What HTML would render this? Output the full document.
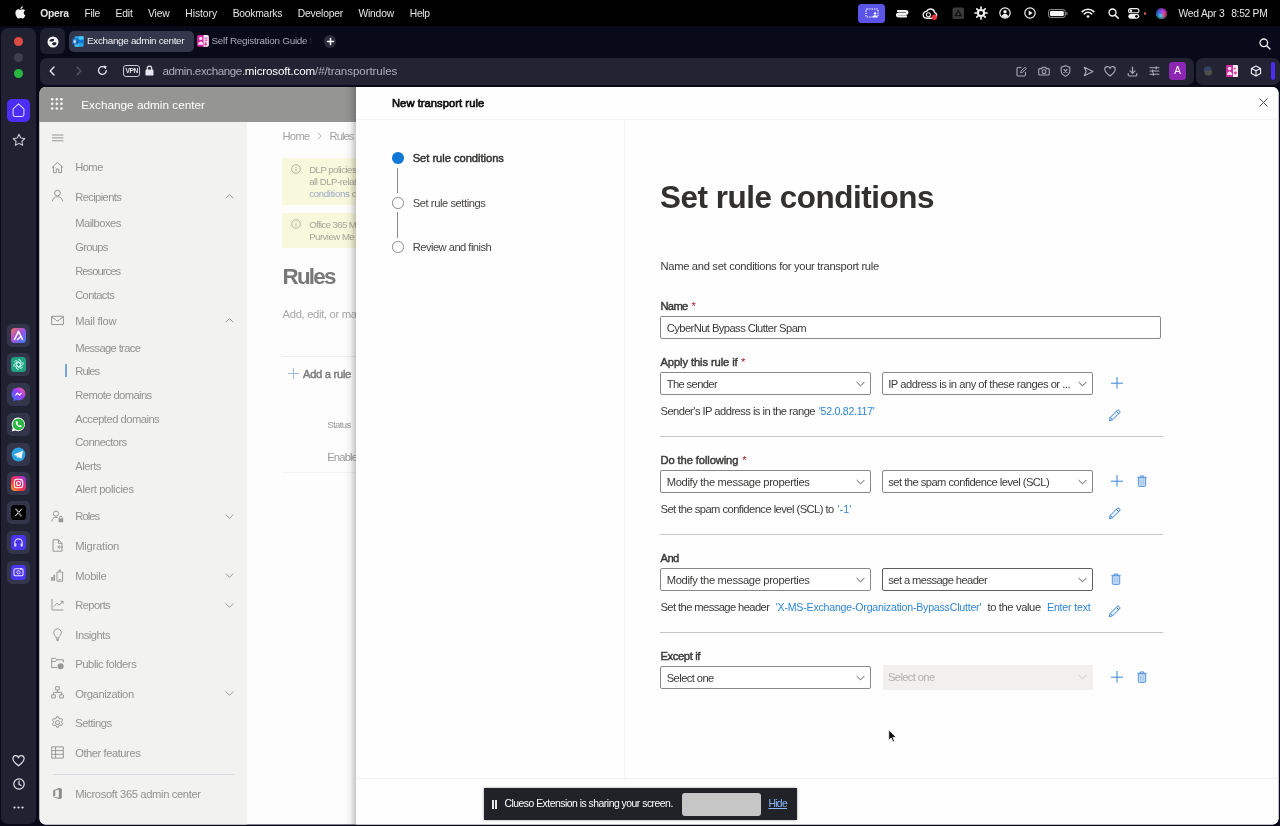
<!DOCTYPE html>
<html lang="en">
<head>
<meta charset="utf-8">
<title>Exchange admin center</title>
<style>
*{box-sizing:border-box;margin:0;padding:0}
html,body{width:1280px;height:826px;overflow:hidden;background:#080919;font-family:"Liberation Sans",sans-serif}
.abs,.t,svg.i{position:absolute}
.t{white-space:pre;display:block}
.layer{position:absolute;left:0;top:0;width:1280px;height:826px}
#page{clip-path:inset(87px 1.5px 1.5px 39.5px round 6px);background:#fdfdfd}
.dd{position:absolute;height:23px;border:1px solid #8a8886;border-radius:2px;background:#fff}
.hr{position:absolute;left:660px;width:502.5px;height:1px;background:#c8c6c4}
.tile{position:absolute;left:7px;width:23px;height:23px;border-radius:5px;background:#33354a}
svg.i{overflow:visible}
</style>
</head>
<body>
<div class="layer" id="root" style="will-change:transform">
<!-- ================= macOS menu bar ================= -->
<div class="abs" style="left:0;top:0;width:1280px;height:26px;background:#000"></div>
<!-- ================= Opera chrome ================= -->
<div class="abs" style="left:1px;top:28px;width:35.3px;height:796px;border-radius:7px;background:#202231"></div>
<div class="abs" style="left:40px;top:28px;width:25.3px;height:26px;border-radius:6px;background:#1e2030"></div>
<div class="abs" style="left:69px;top:31px;width:124.5px;height:21.3px;border-radius:5px;background:#34374b"></div>
<div class="abs" style="left:40px;top:57.5px;width:1153.5px;height:27px;border-radius:7px;background:#222434"></div>
<div class="abs" style="left:1195.5px;top:57.5px;width:84px;height:27px;border-radius:7px;background:#222434"></div>
<svg class="i" style="left:12.70px;top:5.40px" width="14.8" height="14.8" viewBox="0 0 24 24" ><path fill="#f2f2f2" d="M18.71 19.5c-.83 1.24-1.71 2.45-3.05 2.47-1.34.03-1.77-.79-3.29-.79-1.53 0-2 .77-3.27.82-1.31.05-2.3-1.32-3.14-2.53C4.25 17 2.94 12.45 4.7 9.39c.87-1.52 2.43-2.48 4.12-2.51 1.28-.02 2.5.87 3.29.87.78 0 2.26-1.07 3.81-.91.65.03 2.47.26 3.64 1.98-.09.06-2.17 1.28-2.15 3.81.03 3.02 2.65 4.03 2.68 4.04-.03.07-.42 1.44-1.38 2.83M13 3.5c.73-.83 1.94-1.46 2.94-1.5.13 1.17-.34 2.35-1.04 3.19-.69.85-1.83 1.51-2.95 1.42-.15-1.15.41-2.35 1.05-3.11z"/></svg>
<div class="abs" style="left:858.4px;top:4px;width:27px;height:18.8px;border-radius:3.5px;background:#5a55e8"></div>
<svg class="i" style="left:865.00px;top:7.80px" width="14" height="11" viewBox="0 0 14 11" ><rect x="1" y="1" width="12" height="8" rx="1" fill="none" stroke="#fff" stroke-width="1.1" stroke-dasharray="1.4 .9"/><circle cx="10" cy="5.4" r="1.2" fill="#fff"/><path d="M7.6 9.2c.3-1.5 1.2-2 2.4-2s2.1.5 2.4 2z" fill="#fff"/></svg>
<svg class="i" style="left:895.30px;top:8.00px" width="14" height="11" viewBox="0 0 14 11" ><path d="M3 3.2h7.5c2.4 0 2.4 2.6 0 2.6H4c-2.6 0-2.6 2.6 0 2.6h7" fill="none" stroke="#f2f2f2" stroke-width="2.3" stroke-linecap="round"/></svg>
<svg class="i" style="left:922.00px;top:7.50px" width="16" height="12" viewBox="0 0 16 12" ><path d="M4.6 10.2a3.4 3.4 0 0 1 0-6.8 4.3 4.3 0 0 1 8.1 1.2 2.9 2.9 0 0 1-.6 5.6z" fill="none" stroke="#eee" stroke-width="1.4"/><circle cx="6.4" cy="6.8" r="2" fill="none" stroke="#eee" stroke-width="1.1"/><circle cx="12.3" cy="9.2" r="2.7" fill="#e8383d"/></svg>
<svg class="i" style="left:951.75px;top:7.15px" width="12.5" height="12.5" viewBox="0 0 12.5 12.5" ><rect x=".5" y=".5" width="11.5" height="11.5" rx="1.5" fill="#3a3a3a"/><path d="M6.25 3.6 9.3 8.6H3.2z" fill="none" stroke="#111" stroke-width="1.2"/></svg>
<svg class="i" style="left:974.30px;top:6.40px" width="14" height="14" viewBox="0 0 14 14" ><circle cx="7" cy="7" r="3.1" fill="none" stroke="#f2f2f2" stroke-width="2"/><g stroke="#f2f2f2" stroke-width="1.7" stroke-linecap="round"><path d="M7 1v1.6M7 11.4V13M1 7h1.6M11.4 7H13M2.8 2.8l1.1 1.1M10.1 10.1l1.1 1.1M2.8 11.2l1.1-1.1M10.1 3.9l1.1-1.1"/></g></svg>
<svg class="i" style="left:999.00px;top:7.40px" width="12" height="12" viewBox="0 0 12 12" ><circle cx="6" cy="6" r="5.2" fill="none" stroke="#f2f2f2" stroke-width="1.2"/><circle cx="6" cy="4.7" r="1.7" fill="#f2f2f2"/><path d="M2.7 9.3c.6-1.7 1.8-2.2 3.3-2.2s2.7.5 3.3 2.2A5 5 0 0 1 6 10.8a5 5 0 0 1-3.3-1.5z" fill="#f2f2f2"/></svg>
<svg class="i" style="left:1023.70px;top:7.40px" width="12" height="12" viewBox="0 0 12 12" ><circle cx="6" cy="6" r="5.2" fill="none" stroke="#f2f2f2" stroke-width="1.2"/><path d="M4.7 3.6 8.6 6 4.7 8.4z" fill="#f2f2f2"/></svg>
<svg class="i" style="left:1047.50px;top:8.90px" width="20" height="9" viewBox="0 0 20 9" ><rect x=".6" y=".6" width="16.6" height="7.8" rx="2" fill="none" stroke="#9a9a9a" stroke-width="1"/><rect x="2" y="2" width="13.8" height="5" rx="1" fill="#f4f4f4"/><path d="M18.4 3v3c.9-.2 1.2-.9 1.2-1.5S19.300 3.200 18.400 3z" fill="#9a9a9a"/></svg>
<svg class="i" style="left:1080.60px;top:8.15px" width="14" height="10.5" viewBox="0 0 14 10.5" ><g fill="none" stroke="#f2f2f2" stroke-width="1.7" stroke-linecap="round"><path d="M1.2 3.6a8.3 8.3 0 0 1 11.600 0"/><path d="M3.4 5.900a5.200 5.200 0 0 1 7.200 0"/></g><path d="M7 10.200 5.200 8.100a2.600 2.600 0 0 1 3.600 0z" fill="#f2f2f2"/></svg>
<svg class="i" style="left:1107.50px;top:8.10px" width="11" height="11" viewBox="0 0 11 11" ><circle cx="4.5" cy="4.5" r="3.5" fill="none" stroke="#f2f2f2" stroke-width="1.4"/><path d="M7.100 7.100 10.300 10.300" stroke="#f2f2f2" stroke-width="1.600" stroke-linecap="round"/></svg>
<svg class="i" style="left:1128.45px;top:7.90px" width="11.5" height="11" viewBox="0 0 11.5 11" ><rect x=".6" y=".6" width="10.300" height="4.200" rx="2.100" fill="none" stroke="#f2f2f2" stroke-width="1.100"/><circle cx="3" cy="2.700" r="1.200" fill="#f2f2f2"/><rect x=".3" y="6" width="10.900" height="4.700" rx="2.350" fill="#f2f2f2"/><circle cx="8.500" cy="8.350" r="1.300" fill="#000"/></svg>
<div class="abs" style="left:1143.6px;top:12.4px;width:2.300px;height:2.300px;border-radius:50%;background:#cc504c"></div>
<div class="abs" style="left:1156.2px;top:8.200px;width:10.600px;height:10.600px;border-radius:50%;background:conic-gradient(from 200deg,#3fd0e6,#3a6df0,#c23df0,#f0457a,#3fd0e6);box-shadow:inset 0 0 2.500px 1px rgba(10,10,30,.55)"></div>
<div class="abs" style="left:14.100px;top:36.500px;width:9px;height:9px;border-radius:50%;background:#df4a42"></div>
<div class="abs" style="left:14.100px;top:52.500px;width:9px;height:9px;border-radius:50%;background:#3d3f4e"></div>
<div class="abs" style="left:14.100px;top:68.500px;width:9px;height:9px;border-radius:50%;background:#27b83e"></div>
<svg class="i" style="left:46.50px;top:35.50px" width="12" height="12" viewBox="0 0 12 12" ><circle cx="6" cy="6" r="5.500" fill="#f1f1f4"/><path d="M2.300 4.700C2.900 3.200 5 2.500 6.700 3.100 7.700 3.500 7.200 4.800 6.100 5.200 5 5.600 3.500 5.900 2.300 4.700zM5.100 7.500C5.700 6.200 7.600 5.900 8.900 6.500 9.900 7.100 9.300 8.600 8.100 9.200 6.800 9.700 4.900 8.900 5.100 7.500z" fill="#1e2030"/></svg>
<svg class="i" style="left:72.00px;top:36.20px" width="11.6" height="11" viewBox="0 0 11.6 11" ><rect x="2.600" y=".2" width="9" height="10.600" rx="1.200" fill="#28a8ea"/><path d="M2.600 3.600h9v3.600h-9z" fill="#0f78d4"/><path d="M7 .2h4.600v3.400H7zM2.600 7.200H7v3.600H2.600z" fill="#50d9ff" opacity=".7"/><rect x="0" y="2.400" width="6.200" height="6.200" rx=".9" fill="#0f62b4"/><path d="M2 4.100h2.300M2 5.500h2M2 6.900h2.300M2 4.100v2.800" stroke="#fff" stroke-width=".8" fill="none"/></svg>
<svg class="i" style="left:196.60px;top:35.40px" width="11.8" height="11.8" viewBox="0 0 11.8 11.8" ><rect width="11.800" height="11.800" rx="1.800" fill="#d4229b"/><path d="M6.500 0h3.500a1.800 1.800 0 0 1 1.800 1.800v8.200a1.800 1.800 0 0 1-1.800 1.800H6.500z" fill="#f3e9f2"/><circle cx="3.700" cy="3.400" r="1.700" fill="#fbe6f5"/><path d="M1 9.800c.3-2.300 1.300-3.300 2.700-3.300s2.400 1 2.700 3.300z" fill="#fbe6f5"/><path d="M7.600 3.200h2.800M7.600 5.200h2.800M7.600 7.200h2" stroke="#d4229b" stroke-width=".9"/><circle cx="8.600" cy="9.200" r="1.300" fill="#e8338f"/></svg>
<div class="abs" style="left:323.800px;top:35.400px;width:12.400px;height:12.400px;border-radius:50%;background:#2a2c3c"></div>
<svg class="i" style="left:326.50px;top:38.10px" width="7" height="7" viewBox="0 0 7 7" ><path d="M3.500 .5v6M.5 3.500h6" stroke="#fff" stroke-width="1.500" stroke-linecap="round"/></svg>
<svg class="i" style="left:1258.60px;top:38.40px" width="12" height="12" viewBox="0 0 12 12" ><circle cx="4.800" cy="4.800" r="3.800" fill="none" stroke="#f0f0f4" stroke-width="1.300"/><path d="M7.700 7.700 11 11" stroke="#f0f0f4" stroke-width="1.400" stroke-linecap="round"/></svg>
<svg class="i" style="left:49.00px;top:65.50px" width="6" height="10" viewBox="0 0 6 10" ><path d="M5 1 1.200 5 5 9" fill="none" stroke="#e4e4ec" stroke-width="1.400" stroke-linecap="round" stroke-linejoin="round"/></svg>
<svg class="i" style="left:76.20px;top:65.50px" width="6" height="10" viewBox="0 0 6 10" ><path d="M1 1 4.800 5 1 9" fill="none" stroke="#55576a" stroke-width="1.300" stroke-linecap="round" stroke-linejoin="round"/></svg>
<svg class="i" style="left:96.90px;top:65.10px" width="11" height="11" viewBox="0 0 11 11" ><path d="M9.300 5.500A3.900 3.900 0 1 1 7.900 2.500" fill="none" stroke="#e4e4ec" stroke-width="1.300" stroke-linecap="round"/><path d="M6.500 .4 9.600 1.300 8.700 4.400z" fill="#e4e4ec"/></svg>
<div class="abs" style="left:123.200px;top:65.200px;width:16.800px;height:11.400px;border-radius:3px;border:1px solid #c9c9d4"></div>
<svg class="i" style="left:145.30px;top:65.30px" width="9" height="11" viewBox="0 0 9 11" ><rect x=".5" y="4.600" width="8" height="6" rx="1.200" fill="#e4e4ec"/><path d="M2.300 5V3.300a2.200 2.200 0 0 1 4.400 0V5" fill="none" stroke="#e4e4ec" stroke-width="1.200"/></svg>
<svg class="i" style="left:1016.10px;top:65.50px" width="11" height="11" viewBox="0 0 11 11" ><path d="M5 1.500H2.200A1.200 1.200 0 0 0 1 2.700V8.800A1.200 1.200 0 0 0 2.200 10H8.300A1.200 1.200 0 0 0 9.500 8.800V6.200" fill="none" stroke="#aaacb8" stroke-width="1.100" stroke-linecap="round"/><path d="M4.600 6.900 5 5.200 8.900 1.300 10.200 2.600 6.300 6.500z" fill="none" stroke="#aaacb8" stroke-width="1" stroke-linejoin="round"/></svg>
<svg class="i" style="left:1037.60px;top:66.20px" width="12" height="10" viewBox="0 0 12 10" ><path d="M1.700 2.600h1.900l.9-1.400h3l.9 1.400h1.900a1 1 0 0 1 1 1V8a1 1 0 0 1-1 1H1.700a1 1 0 0 1-1-1V3.600a1 1 0 0 1 1-1z" fill="none" stroke="#aaacb8" stroke-width="1.100" stroke-linejoin="round"/><circle cx="6" cy="5.700" r="1.900" fill="none" stroke="#aaacb8" stroke-width="1.100"/></svg>
<svg class="i" style="left:1060.10px;top:65.20px" width="11" height="12" viewBox="0 0 11 12" ><path d="M5.500 .8 9.800 2.300V6c0 2.600-2 4.200-4.300 5.200C3.200 10.200 1.200 8.600 1.200 6V2.300z" fill="none" stroke="#aaacb8" stroke-width="1.100" stroke-linejoin="round"/><path d="M4 4.500 7 7.500M7 4.500 4 7.500" stroke="#aaacb8" stroke-width="1.100" stroke-linecap="round"/></svg>
<svg class="i" style="left:1083.10px;top:65.70px" width="11" height="11" viewBox="0 0 11 11" ><path d="M1.300 1.200 10 5.500 1.300 9.800 3.200 5.500z" fill="none" stroke="#aaacb8" stroke-width="1.100" stroke-linejoin="round"/></svg>
<svg class="i" style="left:1104.40px;top:65.90px" width="12" height="11" viewBox="0 0 12 11" ><path d="M6 10C3.400 8 .9 6.100.9 3.700A2.600 2.600 0 0 1 6 2.600 2.600 2.600 0 0 1 11.100 3.700C11.100 6.100 8.600 8 6 10z" fill="none" stroke="#aaacb8" stroke-width="1.100" stroke-linejoin="round"/></svg>
<svg class="i" style="left:1127.10px;top:65.70px" width="11" height="11" viewBox="0 0 11 11" ><path d="M5.500 1v6M3 4.800 5.500 7.300 8 4.800M1.200 7.600V8.800A1.200 1.200 0 0 0 2.400 10H8.600A1.200 1.200 0 0 0 9.800 8.800V7.600" fill="none" stroke="#aaacb8" stroke-width="1.200" stroke-linecap="round" stroke-linejoin="round"/></svg>
<svg class="i" style="left:1149.10px;top:66.00px" width="11" height="10" viewBox="0 0 11 10" ><path d="M1 1.800h9M1 5h9M1 8.200h9" stroke="#aaacb8" stroke-width="1.100" stroke-linecap="round"/><path d="M7.200 .800v2M3.600 4v2M4.400 7.200v2" stroke="#aaacb8" stroke-width="1.200" stroke-linecap="round"/></svg>
<div class="abs" style="left:1168.700px;top:62.200px;width:17.600px;height:18px;border-radius:3.500px;background:#8c27b4"></div>
<svg class="i" style="left:1201.60px;top:64.80px" width="12" height="12" viewBox="0 0 12 12" opacity=".8"><path d="M2 4.500a3 3 0 0 1 3-3h2a2 2 0 0 1 2 2V6H5a3 3 0 0 0-3 3z" fill="#3d4c74"/><path d="M10 7.500a3 3 0 0 1-3 3H5a2 2 0 0 1-2-2V6h4a3 3 0 0 0 3-3z" fill="#5a5a48"/></svg>
<svg class="i" style="left:1226.00px;top:65.00px" width="12" height="12" viewBox="0 0 12 12" ><rect width="12" height="12" rx="1" fill="#d12a9a"/><path d="M7 0h4a1 1 0 0 1 1 1v10a1 1 0 0 1-1 1H7z" fill="#f7eef6"/><circle cx="3.600" cy="3.600" r="1.800" fill="#f9dff1"/><path d="M1 10c.3-2.400 1.200-3.400 2.600-3.400S6 7.600 6.300 10z" fill="#f9dff1"/><circle cx="8.800" cy="3.500" r="1.100" fill="#e8338f"/><circle cx="9.400" cy="8" r="1.400" fill="#e8338f"/></svg>
<svg class="i" style="left:1249.60px;top:65.00px" width="12" height="12" viewBox="0 0 12 12" ><path d="M6 1 10.600 3.400V8.600L6 11 1.400 8.600V3.400z M1.400 3.400 6 5.800 10.600 3.400M6 5.800V11" fill="none" stroke="#eeeef4" stroke-width="1.100" stroke-linejoin="round"/></svg>
<div class="abs" style="left:1271px;top:62px;width:4.400px;height:18px;border-radius:2px;background:#4a2cf5"></div>
<div class="abs" style="left:7.400px;top:99px;width:23px;height:22.600px;border-radius:5px;background:#4b2df6"></div>
<svg class="i" style="left:12.20px;top:103.05px" width="13" height="14.5" viewBox="0 0 13 14.5" ><path d="M1.100 5.900 6.500 .900 11.900 5.900V11.600A1.800 1.800 0 0 1 10.100 13.400H2.900A1.800 1.800 0 0 1 1.100 11.600z" fill="none" stroke="#dcd6ff" stroke-width="1.050" stroke-linejoin="round"/></svg>
<svg class="i" style="left:11.60px;top:133.00px" width="14" height="14" viewBox="0 0 14 14" ><path d="M7 1.300 8.800 5l4 .5-2.900 2.800.7 4L7 10.400 3.400 12.300l.7-4L1.200 5.500l4-.5z" fill="none" stroke="#cfcfd8" stroke-width="1.050" stroke-linejoin="round"/></svg>
<div class="tile" style="top:323.5px"></div>
<div class="tile" style="top:353.3px"></div>
<div class="tile" style="top:382.9px"></div>
<div class="tile" style="top:412.7px"></div>
<div class="tile" style="top:442.5px"></div>
<div class="tile" style="top:471.9px"></div>
<div class="tile" style="top:501.3px"></div>
<div class="tile" style="top:531.1px"></div>
<div class="tile" style="top:560.5px"></div>
<svg class="i" style="left:11.00px;top:327.50px" width="15" height="15" viewBox="0 0 15 15" ><defs><linearGradient id="ga" x1="0" y1="0" x2="1" y2="1"><stop offset="0" stop-color="#f46a5a"/><stop offset=".5" stop-color="#9a55e8"/><stop offset="1" stop-color="#3a7af0"/></linearGradient></defs><rect width="15" height="15" rx="3.500" fill="url(#ga)"/><path d="M3.500 11.500 7.500 3.300 11.500 11.500M9.800 8.500 6.500 11.500" fill="none" stroke="#fff" stroke-width="1.500" stroke-linejoin="round" stroke-linecap="round"/></svg>
<svg class="i" style="left:11.00px;top:357.30px" width="15" height="15" viewBox="0 0 15 15" ><rect width="15" height="15" rx="3.500" fill="#1fa383"/><g fill="none" stroke="#e6fff7" stroke-width="1"><circle cx="7.500" cy="7.500" r="2"/><path d="M7.500 2.600a2.400 2.400 0 0 1 2.400 2.400v2.300M11.800 5.200a2.400 2.400 0 0 1-.9 3.300L8.900 9.600M11.800 9.900a2.400 2.400 0 0 1-3.300.9L6.500 9.600M7.500 12.400A2.400 2.400 0 0 1 5.100 10V7.700M3.200 9.800a2.400 2.400 0 0 1 .9-3.300L6.100 5.400M3.200 5.100a2.400 2.400 0 0 1 3.300-.9L8.500 5.400"/></g></svg>
<svg class="i" style="left:11.00px;top:386.90px" width="15" height="15" viewBox="0 0 15 15" ><defs><linearGradient id="gm" x1="0" y1="1" x2="1" y2="0"><stop offset="0" stop-color="#2a7bff"/><stop offset=".55" stop-color="#9a3cff"/><stop offset="1" stop-color="#ff5e7a"/></linearGradient></defs><path d="M7.500 .6C3.600 .6.600 3.400.600 7c0 1.900.8 3.600 2.100 4.700V14.200L5 12.900c.8.200 1.600.4 2.500.4 3.900 0 6.900-2.800 6.900-6.400S11.400.600 7.500 .600z" fill="url(#gm)"/><path d="M3.300 9 6.300 5.300 8.200 7 11.700 5.200 8.700 8.900 6.800 7.200z" fill="#fff"/></svg>
<svg class="i" style="left:11.00px;top:416.70px" width="15" height="15" viewBox="0 0 15 15" ><path d="M7.500 .6a6.800 6.800 0 0 0-5.800 10.400L.700 14.400l3.500-.9A6.800 6.800 0 1 0 7.500 .600z" fill="#fff"/><circle cx="7.500" cy="7.400" r="5.800" fill="#2bb741"/><path d="M5.300 4.300c-.5.500-.8 1.200-.5 2.100.6 1.700 2 3.100 3.700 3.700.9.300 1.600 0 2.100-.5.300-.4.200-.7-.1-.9l-1-.6c-.3-.2-.6-.100-.800.200l-.3.400c-.9-.4-1.600-1.100-2-2l.4-.3c.3-.2.400-.5.200-.8l-.6-1c-.2-.4-.6-.500-1.100-.300z" fill="#fff"/></svg>
<svg class="i" style="left:11.00px;top:446.50px" width="15" height="15" viewBox="0 0 15 15" ><circle cx="7.500" cy="7.500" r="6.900" fill="#2aa3e0"/><path d="M3 7.400 11.300 4c.4-.1.700.1.600.6L10.500 11c-.1.500-.4.600-.8.400L7.600 9.800 6.500 10.900c-.2.200-.3.200-.4-.1L5.600 8.800 3.100 8c-.5-.2-.5-.4-.1-.6z" fill="#fff"/><path d="M5.600 8.800 10 5.600 6.800 9.200 6.500 10.900z" fill="#c8dcea"/></svg>
<svg class="i" style="left:11.00px;top:475.90px" width="15" height="15" viewBox="0 0 15 15" ><defs><linearGradient id="gi" x1="0" y1="1" x2="1" y2="0"><stop offset="0" stop-color="#fdb340"/><stop offset=".35" stop-color="#f4383d"/><stop offset=".7" stop-color="#d12d95"/><stop offset="1" stop-color="#6c3fe0"/></linearGradient></defs><rect width="15" height="15" rx="4" fill="url(#gi)"/><rect x="3.300" y="3.300" width="8.400" height="8.400" rx="2.500" fill="none" stroke="#fff" stroke-width="1.100"/><circle cx="7.500" cy="7.500" r="2" fill="none" stroke="#fff" stroke-width="1.100"/><circle cx="10" cy="5" r=".6" fill="#fff"/></svg>
<svg class="i" style="left:11.00px;top:505.30px" width="15" height="15" viewBox="0 0 15 15" ><rect width="15" height="15" rx="3.500" fill="#000"/><path d="M4 3.800h1.700l5.300 7.400H9.300z" fill="#fff"/><path d="M10.800 3.800 4.200 11.200" stroke="#fff" stroke-width="1" /><path d="M4.700 4.300h.7l4.900 6.400h-.7z" fill="#000"/></svg>
<svg class="i" style="left:11.00px;top:535.10px" width="15" height="15" viewBox="0 0 15 15" ><rect width="15" height="15" rx="3.500" fill="#4a36f0"/><path d="M3.800 9.500V7.500a3.700 3.700 0 0 1 7.400 0v2" fill="none" stroke="#d8d4ff" stroke-width="1.200"/><rect x="3.200" y="8.300" width="2.200" height="3.400" rx="1" fill="#d8d4ff"/><rect x="9.600" y="8.300" width="2.200" height="3.400" rx="1" fill="#d8d4ff"/></svg>
<svg class="i" style="left:11.00px;top:564.50px" width="15" height="15" viewBox="0 0 15 15" ><rect width="15" height="15" rx="3.500" fill="#4a36f0"/><rect x="3" y="3.800" width="9" height="7" rx="1.300" fill="none" stroke="#e8e4ff" stroke-width="1.100"/><circle cx="7.500" cy="7.300" r="1.600" fill="none" stroke="#e8e4ff" stroke-width="1"/><path d="M10 3v2M9 4h2" stroke="#e8e4ff" stroke-width=".9"/></svg>
<svg class="i" style="left:12.10px;top:754.60px" width="13" height="12" viewBox="0 0 13 12" ><path d="M6.500 10.800C3.600 8.600 1 6.600 1 4A2.800 2.800 0 0 1 6.500 2.900 2.800 2.800 0 0 1 12 4c0 2.600-2.600 4.600-5.500 6.800z" fill="none" stroke="#e8e8ee" stroke-width="1.200" stroke-linejoin="round"/></svg>
<svg class="i" style="left:12.60px;top:778.00px" width="12" height="12" viewBox="0 0 12 12" ><circle cx="6" cy="6" r="5.200" fill="none" stroke="#e8e8ee" stroke-width="1.200"/><path d="M6 3v3.200l2 1.200" fill="none" stroke="#e8e8ee" stroke-width="1.200" stroke-linecap="round"/></svg>
<svg class="i" style="left:13.10px;top:805.90px" width="11" height="3" viewBox="0 0 11 3" ><circle cx="1.500" cy="1.500" r="1.100" fill="#e8e8ee"/><circle cx="5.500" cy="1.500" r="1.100" fill="#e8e8ee"/><circle cx="9.500" cy="1.500" r="1.100" fill="#e8e8ee"/></svg>
<span class="t" style="left:40.20px;top:6.00px;font-size:10.3px;line-height:16px;color:#e6e6e6;font-weight:700;letter-spacing:-0.253px;">Opera</span>
<span class="t" style="left:84.60px;top:6.00px;font-size:10.3px;line-height:16px;color:#e6e6e6;letter-spacing:-0.348px;">File</span>
<span class="t" style="left:115.50px;top:6.00px;font-size:10.3px;line-height:16px;color:#e6e6e6;letter-spacing:-0.138px;">Edit</span>
<span class="t" style="left:148.00px;top:6.00px;font-size:10.3px;line-height:16px;color:#e6e6e6;letter-spacing:-0.160px;">View</span>
<span class="t" style="left:185.30px;top:6.00px;font-size:10.3px;line-height:16px;color:#e6e6e6;letter-spacing:-0.050px;">History</span>
<span class="t" style="left:232.70px;top:6.00px;font-size:10.3px;line-height:16px;color:#e6e6e6;letter-spacing:-0.222px;">Bookmarks</span>
<span class="t" style="left:297.70px;top:6.00px;font-size:10.3px;line-height:16px;color:#e6e6e6;letter-spacing:-0.171px;">Developer</span>
<span class="t" style="left:358.50px;top:6.00px;font-size:10.3px;line-height:16px;color:#e6e6e6;letter-spacing:-0.204px;">Window</span>
<span class="t" style="left:409.80px;top:6.00px;font-size:10.3px;line-height:16px;color:#e6e6e6;letter-spacing:-0.297px;">Help</span>
<span class="t" style="left:1178.50px;top:6.00px;font-size:10.3px;line-height:16px;color:#e6e6e6;letter-spacing:-0.210px;">Wed Apr 3</span>
<span class="t" style="left:1231.20px;top:6.00px;font-size:10.3px;line-height:16px;color:#e6e6e6;letter-spacing:-0.294px;">8:52 PM</span>
<span class="t" style="left:87.00px;top:33.00px;font-size:9.9px;line-height:16px;color:#f0f0f4;letter-spacing:-0.308px;">Exchange admin center</span>
<span class="t" style="left:211.40px;top:33.00px;font-size:9.9px;line-height:16px;color:#a9aab6;letter-spacing:-0.242px;-webkit-mask-image:linear-gradient(90deg,#000 94%,transparent 100%);mask-image:linear-gradient(90deg,#000 94%,transparent 100%);">Self Registration Guide f</span>
<span class="t" style="left:162.50px;top:62.90px;font-size:11.6px;line-height:16px;color:#acaebb;letter-spacing:-0.407px;">admin.exchange.</span>
<span class="t" style="left:244.70px;top:62.90px;font-size:11.6px;line-height:16px;color:#ffffff;letter-spacing:-0.143px;">microsoft.com</span>
<span class="t" style="left:315.00px;top:62.90px;font-size:11.6px;line-height:16px;color:#acaebb;letter-spacing:-0.093px;">/#/transportrules</span>
<span class="t" style="left:125.50px;top:62.80px;font-size:6.6px;line-height:16px;color:#e6e6ee;font-weight:700;letter-spacing:-0.454px;">VPN</span>
<span class="t" style="left:1174.30px;top:63.30px;font-size:10px;line-height:16px;color:#ffffff;">A</span>

<!-- ================= Page ================= -->
<div class="layer" id="page">
  <div class="abs" style="left:39px;top:87px;width:320px;height:35px;background:#959593"></div>
  <div class="abs" style="left:39px;top:122px;width:208px;height:710px;background:#f2f2f0"></div>
  <!-- banners -->
  <div class="abs" style="left:281.5px;top:158px;width:80px;height:47px;background:#f8f8dc"></div>
  <div class="abs" style="left:281.5px;top:212.5px;width:80px;height:35.5px;background:#f8f8dc"></div>
  <div class="abs" style="left:282px;top:356px;width:80px;height:1px;background:#ececf2"></div>
  <div class="abs" style="left:282px;top:472px;width:80px;height:1px;background:#f4f4f7"></div>
  <div class="abs" style="left:65px;top:364px;width:2px;height:12.5px;background:#7ba7d6"></div>
  <div class="abs" style="left:52.5px;top:774px;width:181px;height:1px;background:#dadae6"></div>
  <svg class="i" style="left:51.00px;top:98.00px" width="11.6" height="11.6" viewBox="0 0 11.6 11.6" ><circle cx="1.2" cy="1.2" r="1.250" fill="#fff"/><circle cx="1.2" cy="5.8" r="1.250" fill="#fff"/><circle cx="1.2" cy="10.4" r="1.250" fill="#fff"/><circle cx="5.8" cy="1.2" r="1.250" fill="#fff"/><circle cx="5.8" cy="5.8" r="1.250" fill="#fff"/><circle cx="5.8" cy="10.4" r="1.250" fill="#fff"/><circle cx="10.4" cy="1.2" r="1.250" fill="#fff"/><circle cx="10.4" cy="5.8" r="1.250" fill="#fff"/><circle cx="10.4" cy="10.4" r="1.250" fill="#fff"/></svg>
<svg class="i" style="left:51.50px;top:133.70px" width="12" height="8" viewBox="0 0 12 8" ><path d="M0 1h11.500M0 3.900h11.500M0 6.800h11.500" stroke="#989898" stroke-width="1"/></svg>
<svg class="i" style="left:50.80px;top:160.50px" width="13" height="13" viewBox="0 0 13 13" ><g fill="none" stroke="#989898" stroke-width="1" stroke-linejoin="round"><path d="M1 6.500 6.500 1.300 12 6.500M2.500 5.300V11.700H5.300V8H7.700V11.700H10.500V5.300"/></g></svg>
<svg class="i" style="left:50.80px;top:189.30px" width="13" height="13" viewBox="0 0 13 13" ><g fill="none" stroke="#989898" stroke-width="1" stroke-linejoin="round"><circle cx="6.500" cy="4" r="2.900"/><path d="M1.200 12.300c.7-3 2.800-4.600 5.300-4.600s4.600 1.600 5.300 4.600"/></g></svg>
<svg class="i" style="left:50.80px;top:314.00px" width="13" height="13" viewBox="0 0 13 13" ><g fill="none" stroke="#989898" stroke-width="1" stroke-linejoin="round"><rect x=".6" y="2.300" width="11.800" height="8.200"/><path d="M.6 2.800 6.500 7.200 12.400 2.800"/></g></svg>
<svg class="i" style="left:50.80px;top:509.50px" width="13" height="13" viewBox="0 0 13 13" ><g fill="none" stroke="#989898" stroke-width="1" stroke-linejoin="round"><circle cx="5" cy="3.600" r="2.600"/><path d="M.800 11.500c.4-2.600 2-4.300 4.200-4.300 .9 0 1.600.2 2.300.7"/><rect x="7.600" y="8.400" width="4.600" height="3.800" fill="#989898" stroke="none"/><path d="M8.600 8.400V7.400a1.300 1.300 0 0 1 2.600 0v1"/></g></svg>
<svg class="i" style="left:50.80px;top:539.30px" width="13" height="13" viewBox="0 0 13 13" ><g fill="none" stroke="#989898" stroke-width="1" stroke-linejoin="round"><path d="M7.500 .8H2V12.200H11V4.300z M7.500 .8V4.300H11"/><path d="M11.800 8H6.800M8.600 6.200 6.800 8 8.600 9.800"/></g></svg>
<svg class="i" style="left:50.80px;top:568.80px" width="13" height="13" viewBox="0 0 13 13" ><g fill="none" stroke="#989898" stroke-width="1" stroke-linejoin="round"><rect x="6" y="3" width="5.600" height="9.200"/><path d="M7.500 1.200h2.600M8.800 1.200V3"/><path d="M1 8v3.800M3.200 5.800v6" stroke-width="1.700"/><path d="M7.800 10.600h2" /></g></svg>
<svg class="i" style="left:50.80px;top:598.20px" width="13" height="13" viewBox="0 0 13 13" ><g fill="none" stroke="#989898" stroke-width="1" stroke-linejoin="round"><path d="M1 .8V12H12.500"/><path d="M3 8.500 6 5.200 8.200 7.300 12 3.300"/><path d="M9.600 3.300H12V5.700"/></g></svg>
<svg class="i" style="left:50.80px;top:627.80px" width="13" height="13" viewBox="0 0 13 13" ><g fill="none" stroke="#989898" stroke-width="1" stroke-linejoin="round"><path d="M6.500 .7a3.900 3.900 0 0 0-2.300 7c.5.500.8 1 .8 1.700V10H8V9.400c0-.7.300-1.200.8-1.700A3.900 3.900 0 0 0 6.500 .700z"/><path d="M5 11.300H8M5.500 12.500h2"/></g></svg>
<svg class="i" style="left:50.80px;top:657.30px" width="13" height="13" viewBox="0 0 13 13" ><g fill="none" stroke="#989898" stroke-width="1" stroke-linejoin="round"><path d="M.7 10.500V1.300H4.500L5.800 2.800H12.300V5.500M.7 10.500H6"/><circle cx="9.600" cy="9.200" r="3" fill="#989898" stroke="none"/><path d="M.7 4.500H4.500L5.800 2.800"/></g></svg>
<svg class="i" style="left:50.80px;top:686.30px" width="13" height="13" viewBox="0 0 13 13" ><g fill="none" stroke="#989898" stroke-width="1" stroke-linejoin="round"><rect x="4.700" y=".700" width="3.600" height="3.200"/><rect x=".7" y="8.800" width="3.600" height="3.200"/><rect x="8.700" y="8.800" width="3.600" height="3.200"/><path d="M6.500 3.900V6.400M2.500 8.800V6.400H10.500V8.800"/></g></svg>
<svg class="i" style="left:50.80px;top:716.30px" width="13" height="13" viewBox="0 0 13 13" ><g fill="none" stroke="#989898" stroke-width="1" stroke-linejoin="round"><circle cx="6.500" cy="6.500" r="2"/><path d="M5.500 .8h2l.4 1.600 1.100.6 1.600-.5 1 1.700-1.200 1.200v1.200l1.200 1.200-1 1.700-1.600-.5-1.100.6-.4 1.600h-2l-.4-1.600-1.100-.6-1.600.5-1-1.700 1.200-1.200V5.400L1.400 4.200l1-1.700 1.600.5 1.100-.6z"/></g></svg>
<svg class="i" style="left:50.80px;top:745.60px" width="13" height="13" viewBox="0 0 13 13" ><g fill="none" stroke="#989898" stroke-width="1" stroke-linejoin="round"><rect x=".7" y=".900" width="11.600" height="11.200"/><path d="M.7 4.600H12.300M.7 8.300H12.300M4.600 .900V12.100"/></g></svg>
<svg class="i" style="left:51.50px;top:787.40px" width="11" height="13" viewBox="0 0 11 13" ><path d="M1.200 3.300 6.800 .900 9.800 1.800V11.200L6.800 12.100 1.200 9.900 6.800 10.600V2.600L3.200 3.500V8.800L1.200 9.900z" fill="#8a8a8a"/></svg>
<svg class="i" style="left:224.50px;top:192.60px" width="9" height="6.8" viewBox="0 0 9 6.8" ><path d="M.7 5.300 4.500 1.500 8.300 5.300" fill="none" stroke="#989898" stroke-width="1"/></svg>
<svg class="i" style="left:224.50px;top:317.00px" width="9" height="6.8" viewBox="0 0 9 6.8" ><path d="M.7 5.300 4.500 1.500 8.300 5.300" fill="none" stroke="#989898" stroke-width="1"/></svg>
<svg class="i" style="left:224.50px;top:512.90px" width="9" height="6.8" viewBox="0 0 9 6.8" ><path d="M.7 1.500 4.500 5.300 8.300 1.500" fill="none" stroke="#989898" stroke-width="1"/></svg>
<svg class="i" style="left:224.50px;top:572.20px" width="9" height="6.8" viewBox="0 0 9 6.8" ><path d="M.7 1.500 4.500 5.300 8.300 1.500" fill="none" stroke="#989898" stroke-width="1"/></svg>
<svg class="i" style="left:224.50px;top:601.70px" width="9" height="6.8" viewBox="0 0 9 6.8" ><path d="M.7 1.500 4.500 5.300 8.300 1.500" fill="none" stroke="#989898" stroke-width="1"/></svg>
<svg class="i" style="left:224.50px;top:690.10px" width="9" height="6.8" viewBox="0 0 9 6.8" ><path d="M.7 1.500 4.500 5.300 8.300 1.500" fill="none" stroke="#989898" stroke-width="1"/></svg>
<svg class="i" style="left:317.10px;top:132.00px" width="5" height="8" viewBox="0 0 5 8" ><path d="M1 .800 4.200 4 1 7.200" fill="none" stroke="#aaa" stroke-width=".9"/></svg>
<svg class="i" style="left:291.30px;top:164.30px" width="10" height="10" viewBox="0 0 10 10" ><circle cx="5" cy="5" r="4.300" fill="none" stroke="#a9a99a" stroke-width=".9"/><path d="M5 4.400V7.300M5 2.700V3.500" stroke="#a9a99a" stroke-width=".9"/></svg>
<svg class="i" style="left:291.30px;top:219.00px" width="10" height="10" viewBox="0 0 10 10" ><circle cx="5" cy="5" r="4.300" fill="none" stroke="#a9a99a" stroke-width=".9"/><path d="M5 4.400V7.300M5 2.700V3.500" stroke="#a9a99a" stroke-width=".9"/></svg>
<svg class="i" style="left:288.10px;top:368.20px" width="11" height="11" viewBox="0 0 11 11" ><path d="M5.500 0v11M0 5.500h11" stroke="#a3bbdc" stroke-width="1"/></svg>
  <span class="t" style="left:81.25px;top:97.00px;font-size:11.8px;line-height:16px;color:#ffffff;letter-spacing:-0.007px;">Exchange admin center</span>
<span class="t" style="left:75.20px;top:159.20px;font-size:11.2px;line-height:16px;color:#929292;letter-spacing:-0.561px;">Home</span>
<span class="t" style="left:75.20px;top:188.60px;font-size:11.2px;line-height:16px;color:#929292;letter-spacing:-0.623px;">Recipients</span>
<span class="t" style="left:75.20px;top:215.30px;font-size:11.2px;line-height:16px;color:#929292;letter-spacing:-0.531px;">Mailboxes</span>
<span class="t" style="left:75.20px;top:239.00px;font-size:11.2px;line-height:16px;color:#929292;letter-spacing:-0.715px;">Groups</span>
<span class="t" style="left:75.20px;top:262.60px;font-size:11.2px;line-height:16px;color:#929292;letter-spacing:-0.943px;">Resources</span>
<span class="t" style="left:75.20px;top:286.70px;font-size:11.2px;line-height:16px;color:#929292;letter-spacing:-0.645px;">Contacts</span>
<span class="t" style="left:75.30px;top:313.00px;font-size:11.2px;line-height:16px;color:#929292;letter-spacing:-0.280px;">Mail flow</span>
<span class="t" style="left:75.30px;top:339.70px;font-size:11.2px;line-height:16px;color:#929292;letter-spacing:-0.644px;">Message trace</span>
<span class="t" style="left:75.30px;top:363.30px;font-size:11.2px;line-height:16px;color:#929292;letter-spacing:-0.982px;">Rules</span>
<span class="t" style="left:75.30px;top:386.90px;font-size:11.2px;line-height:16px;color:#929292;letter-spacing:-0.591px;">Remote domains</span>
<span class="t" style="left:75.30px;top:410.60px;font-size:11.2px;line-height:16px;color:#929292;letter-spacing:-0.509px;">Accepted domains</span>
<span class="t" style="left:75.30px;top:434.20px;font-size:11.2px;line-height:16px;color:#929292;letter-spacing:-0.592px;">Connectors</span>
<span class="t" style="left:75.30px;top:458.10px;font-size:11.2px;line-height:16px;color:#929292;letter-spacing:-0.502px;">Alerts</span>
<span class="t" style="left:75.30px;top:481.40px;font-size:11.2px;line-height:16px;color:#929292;letter-spacing:-0.359px;">Alert policies</span>
<span class="t" style="left:75.30px;top:508.20px;font-size:11.2px;line-height:16px;color:#929292;letter-spacing:-0.982px;">Roles</span>
<span class="t" style="left:75.30px;top:538.00px;font-size:11.2px;line-height:16px;color:#929292;letter-spacing:-0.246px;">Migration</span>
<span class="t" style="left:75.30px;top:567.50px;font-size:11.2px;line-height:16px;color:#929292;letter-spacing:-0.328px;">Mobile</span>
<span class="t" style="left:75.30px;top:597.00px;font-size:11.2px;line-height:16px;color:#929292;letter-spacing:-0.627px;">Reports</span>
<span class="t" style="left:75.30px;top:626.60px;font-size:11.2px;line-height:16px;color:#929292;letter-spacing:-0.470px;">Insights</span>
<span class="t" style="left:75.30px;top:656.10px;font-size:11.2px;line-height:16px;color:#929292;letter-spacing:-0.441px;">Public folders</span>
<span class="t" style="left:75.20px;top:685.80px;font-size:11.2px;line-height:16px;color:#929292;letter-spacing:-0.411px;">Organization</span>
<span class="t" style="left:75.20px;top:715.40px;font-size:11.2px;line-height:16px;color:#929292;letter-spacing:-0.517px;">Settings</span>
<span class="t" style="left:75.20px;top:745.00px;font-size:11.2px;line-height:16px;color:#929292;letter-spacing:-0.458px;">Other features</span>
<span class="t" style="left:75.20px;top:786.40px;font-size:11.2px;line-height:16px;color:#929292;letter-spacing:-0.363px;">Microsoft 365 admin center</span>
<span class="t" style="left:282.50px;top:127.80px;font-size:11.2px;line-height:16px;color:#a2a2a2;letter-spacing:-0.711px;">Home</span>
<span class="t" style="left:329.50px;top:127.80px;font-size:11.2px;line-height:16px;color:#a2a2a2;letter-spacing:-0.922px;">Rules</span>
<span class="t" style="left:309.20px;top:161.90px;font-size:9.6px;line-height:16px;color:#a5a59a;letter-spacing:-0.513px;">DLP policies</span>
<span class="t" style="left:309.20px;top:174.00px;font-size:9.6px;line-height:16px;color:#a5a59a;letter-spacing:-0.446px;">all DLP-relat</span>
<span class="t" style="left:309.20px;top:186.00px;font-size:9.6px;line-height:16px;color:#9aabc4;letter-spacing:-0.290px;">conditions</span>
<span class="t" style="left:351.80px;top:186.00px;font-size:9.6px;line-height:16px;color:#a5a59a;">c</span>
<span class="t" style="left:309.20px;top:216.70px;font-size:9.6px;line-height:16px;color:#a5a59a;letter-spacing:-0.602px;">Office 365 M</span>
<span class="t" style="left:309.20px;top:228.70px;font-size:9.6px;line-height:16px;color:#a5a59a;letter-spacing:-0.512px;">Purview Me</span>
<span class="t" style="left:282.60px;top:263.00px;font-size:22.4px;line-height:28px;color:#787878;font-weight:700;letter-spacing:-1.797px;">Rules</span>
<span class="t" style="left:282.60px;top:306.00px;font-size:11.2px;line-height:16px;color:#a6a6a6;letter-spacing:-0.312px;">Add, edit, or ma</span>
<span class="t" style="left:303.00px;top:365.70px;font-size:11.2px;line-height:16px;color:#7c7c7c;-webkit-text-stroke:.45px #7c7c7c;letter-spacing:-0.300px;">Add a rule</span>
<span class="t" style="left:327.20px;top:417.20px;font-size:9.6px;line-height:16px;color:#9a9a9a;letter-spacing:-0.617px;">Status</span>
<span class="t" style="left:327.20px;top:448.60px;font-size:11.2px;line-height:16px;color:#9a9a9a;letter-spacing:-0.807px;">Enable</span>
  <!-- panel shadow + panel -->
  <div class="abs" style="left:344px;top:87px;width:12px;height:740px;background:linear-gradient(90deg,rgba(0,0,0,0) 0%,rgba(0,0,0,.04) 50%,rgba(0,0,0,.22) 100%)"></div>
  <div class="abs" style="left:356px;top:87px;width:924px;height:740px;background:#fefefe"></div>
  <div class="abs" style="left:356px;top:118.5px;width:924px;height:1px;background:#f3f3f8"></div>
  <div class="abs" style="left:624px;top:119px;width:1px;height:660px;background:#f5f5f8"></div>
  <div class="abs" style="left:356px;top:778px;width:924px;height:1px;background:#f0f0f6"></div>
  <!-- steps -->
  <div class="abs" style="left:392px;top:152.4px;width:11.6px;height:11.6px;border-radius:50%;background:#0f78d4"></div>
  <div class="abs" style="left:397.3px;top:167.5px;width:1px;height:25.5px;background:#8a8886"></div>
  <div class="abs" style="left:392.2px;top:197.2px;width:11.4px;height:11.4px;border-radius:50%;border:1.1px solid #8a8886;background:#fff"></div>
  <div class="abs" style="left:397.3px;top:212px;width:1px;height:25.5px;background:#8a8886"></div>
  <div class="abs" style="left:392.2px;top:241.3px;width:11.4px;height:11.4px;border-radius:50%;border:1.1px solid #8a8886;background:#fff"></div>
  <!-- fields -->
  <div class="dd" style="left:660px;top:315.7px;width:501px;height:23.4px"></div>
  <div class="dd" style="left:660px;top:371.7px;width:211px"></div>
  <div class="dd" style="left:881.7px;top:371.7px;width:211px"></div>
  <div class="hr" style="top:436px"></div>
  <div class="dd" style="left:660px;top:469.6px;width:211px"></div>
  <div class="dd" style="left:881.7px;top:469.6px;width:211px"></div>
  <div class="hr" style="top:534px"></div>
  <div class="dd" style="left:660px;top:567.6px;width:211px"></div>
  <div class="dd" style="left:881.7px;top:567.6px;width:211px;border-color:#605e5c"></div>
  <div class="hr" style="top:632px"></div>
  <div class="dd" style="left:660px;top:665.6px;width:211px"></div>
  <div class="abs" style="left:882.5px;top:665px;width:210px;height:24.5px;background:#f1f0ef"></div>
  <svg class="i" style="left:1258.50px;top:98.30px" width="9" height="9" viewBox="0 0 9 9" ><path d="M.5 .5 8.500 8.500M8.500 .5 .5 8.500" stroke="#484644" stroke-width="1"/></svg>
<svg class="i" style="left:856.10px;top:380.60px" width="9" height="6" viewBox="0 0 9 6" ><path d="M.6 1 4.500 4.900 8.400 1" fill="none" stroke="#605e5c" stroke-width="1"/></svg>
<svg class="i" style="left:856.10px;top:478.60px" width="9" height="6" viewBox="0 0 9 6" ><path d="M.6 1 4.500 4.900 8.400 1" fill="none" stroke="#605e5c" stroke-width="1"/></svg>
<svg class="i" style="left:856.10px;top:576.60px" width="9" height="6" viewBox="0 0 9 6" ><path d="M.6 1 4.500 4.900 8.400 1" fill="none" stroke="#605e5c" stroke-width="1"/></svg>
<svg class="i" style="left:856.10px;top:674.60px" width="9" height="6" viewBox="0 0 9 6" ><path d="M.6 1 4.500 4.900 8.400 1" fill="none" stroke="#605e5c" stroke-width="1"/></svg>
<svg class="i" style="left:1077.80px;top:380.60px" width="9" height="6" viewBox="0 0 9 6" ><path d="M.6 1 4.500 4.900 8.400 1" fill="none" stroke="#605e5c" stroke-width="1"/></svg>
<svg class="i" style="left:1077.80px;top:478.60px" width="9" height="6" viewBox="0 0 9 6" ><path d="M.6 1 4.500 4.900 8.400 1" fill="none" stroke="#605e5c" stroke-width="1"/></svg>
<svg class="i" style="left:1077.80px;top:576.60px" width="9" height="6" viewBox="0 0 9 6" ><path d="M.6 1 4.500 4.900 8.400 1" fill="none" stroke="#605e5c" stroke-width="1"/></svg>
<svg class="i" style="left:1077.80px;top:674.40px" width="9" height="6" viewBox="0 0 9 6" ><path d="M.6 1 4.500 4.900 8.400 1" fill="none" stroke="#c8c6c4" stroke-width="1"/></svg>
<svg class="i" style="left:1110.50px;top:377.30px" width="12" height="12" viewBox="0 0 12 12" ><path d="M6 0V11.600M0 6.200H12" stroke="#3a84d4" stroke-width="1"/></svg>
<svg class="i" style="left:1107.90px;top:409.20px" width="13" height="13" viewBox="0 0 13 13" ><path d="M1.300 11.700 2.200 8.400 9.200 1.400A1.250 1.250 0 0 1 11 1.400L11.600 2A1.250 1.250 0 0 1 11.600 3.800L4.600 10.800z M8.300 2.300 10.700 4.700M2.200 8.400 4.600 10.800" fill="#e6f0fb" stroke="#3a84d4" stroke-width="1" stroke-linejoin="round"/></svg>
<svg class="i" style="left:1110.50px;top:475.30px" width="12" height="12" viewBox="0 0 12 12" ><path d="M6 0V11.600M0 6.200H12" stroke="#3a84d4" stroke-width="1"/></svg>
<svg class="i" style="left:1137.30px;top:475.10px" width="10" height="12" viewBox="0 0 10 12" ><path d="M.3 2.200H9.700M3.400 2.200V.900H6.600V2.200" fill="none" stroke="#5a97dc" stroke-width="1"/><path d="M1.300 2.700H8.700V10.400A1 1 0 0 1 7.700 11.400H2.300A1 1 0 0 1 1.300 10.400z" fill="#c2d9f2" stroke="#5a97dc" stroke-width="1"/><path d="M3.700 4.600V9.400M6.300 4.600V9.400" stroke="#5a97dc" stroke-width=".6" opacity=".6"/></svg>
<svg class="i" style="left:1107.90px;top:507.20px" width="13" height="13" viewBox="0 0 13 13" ><path d="M1.300 11.700 2.200 8.400 9.200 1.400A1.250 1.250 0 0 1 11 1.400L11.600 2A1.250 1.250 0 0 1 11.600 3.800L4.600 10.800z M8.300 2.300 10.700 4.700M2.200 8.400 4.600 10.800" fill="#e6f0fb" stroke="#3a84d4" stroke-width="1" stroke-linejoin="round"/></svg>
<svg class="i" style="left:1111.00px;top:573.20px" width="10" height="12" viewBox="0 0 10 12" ><path d="M.3 2.200H9.700M3.400 2.200V.900H6.600V2.200" fill="none" stroke="#5a97dc" stroke-width="1"/><path d="M1.300 2.700H8.700V10.400A1 1 0 0 1 7.700 11.400H2.300A1 1 0 0 1 1.300 10.400z" fill="#c2d9f2" stroke="#5a97dc" stroke-width="1"/><path d="M3.700 4.600V9.400M6.300 4.600V9.400" stroke="#5a97dc" stroke-width=".6" opacity=".6"/></svg>
<svg class="i" style="left:1107.90px;top:605.20px" width="13" height="13" viewBox="0 0 13 13" ><path d="M1.300 11.700 2.200 8.400 9.200 1.400A1.250 1.250 0 0 1 11 1.400L11.600 2A1.250 1.250 0 0 1 11.600 3.800L4.600 10.800z M8.300 2.300 10.700 4.700M2.200 8.400 4.600 10.800" fill="#e6f0fb" stroke="#3a84d4" stroke-width="1" stroke-linejoin="round"/></svg>
<svg class="i" style="left:1110.50px;top:671.30px" width="12" height="12" viewBox="0 0 12 12" ><path d="M6 0V11.600M0 6.200H12" stroke="#3a84d4" stroke-width="1"/></svg>
<svg class="i" style="left:1137.30px;top:670.80px" width="10" height="12" viewBox="0 0 10 12" ><path d="M.3 2.200H9.700M3.400 2.200V.900H6.600V2.200" fill="none" stroke="#5a97dc" stroke-width="1"/><path d="M1.300 2.700H8.700V10.400A1 1 0 0 1 7.700 11.400H2.300A1 1 0 0 1 1.300 10.400z" fill="#c2d9f2" stroke="#5a97dc" stroke-width="1"/><path d="M3.700 4.600V9.400M6.300 4.600V9.400" stroke="#5a97dc" stroke-width=".6" opacity=".6"/></svg>
  <span class="t" style="left:392.00px;top:94.90px;font-size:11.2px;line-height:16px;color:#111111;-webkit-text-stroke:.7px #111111;letter-spacing:0.044px;">New transport rule</span>
<span class="t" style="left:412.70px;top:149.60px;font-size:11.2px;line-height:16px;color:#323130;-webkit-text-stroke:.45px #323130;letter-spacing:-0.045px;">Set rule conditions</span>
<span class="t" style="left:412.70px;top:194.60px;font-size:11.2px;line-height:16px;color:#484644;letter-spacing:-0.437px;">Set rule settings</span>
<span class="t" style="left:412.70px;top:238.60px;font-size:11.2px;line-height:16px;color:#484644;letter-spacing:-0.540px;">Review and finish</span>
<span class="t" style="left:660.00px;top:177.90px;font-size:31.4px;line-height:39px;color:#323130;font-weight:700;letter-spacing:-0.450px;">Set rule conditions</span>
<span class="t" style="left:660.50px;top:258.10px;font-size:11.2px;line-height:16px;color:#3b3a39;letter-spacing:-0.317px;">Name and set conditions for your transport rule</span>
<span class="t" style="left:660.50px;top:298.00px;font-size:11.2px;line-height:16px;color:#3b3a39;-webkit-text-stroke:.45px #3b3a39;letter-spacing:-0.711px;">Name</span>
<span class="t" style="left:691.50px;top:298.00px;font-size:11.2px;line-height:16px;color:#a4262c;">*</span>
<span class="t" style="left:666.75px;top:320.40px;font-size:11.2px;line-height:16px;color:#3b3a39;letter-spacing:-0.577px;">CyberNut Bypass Clutter Spam</span>
<span class="t" style="left:660.50px;top:354.00px;font-size:11.2px;line-height:16px;color:#3b3a39;-webkit-text-stroke:.45px #3b3a39;letter-spacing:-0.109px;">Apply this rule if</span>
<span class="t" style="left:741.00px;top:354.00px;font-size:11.2px;line-height:16px;color:#a4262c;">*</span>
<span class="t" style="left:666.75px;top:376.00px;font-size:11.2px;line-height:16px;color:#3b3a39;letter-spacing:-0.629px;">The sender</span>
<span class="t" style="left:888.25px;top:376.00px;font-size:11.2px;line-height:16px;color:#3b3a39;letter-spacing:-0.497px;">IP address is in any of these ranges or ...</span>
<span class="t" style="left:660.50px;top:403.20px;font-size:11.2px;line-height:16px;color:#3b3a39;letter-spacing:-0.545px;">Sender's IP address is in the range</span>
<span class="t" style="left:818.75px;top:403.20px;font-size:10.6px;line-height:16px;color:#2f86d6;letter-spacing:-0.264px;">'52.0.82.117'</span>
<span class="t" style="left:660.50px;top:452.00px;font-size:11.2px;line-height:16px;color:#3b3a39;-webkit-text-stroke:.45px #3b3a39;letter-spacing:-0.113px;">Do the following</span>
<span class="t" style="left:742.30px;top:452.00px;font-size:11.2px;line-height:16px;color:#a4262c;">*</span>
<span class="t" style="left:666.75px;top:474.00px;font-size:11.2px;line-height:16px;color:#3b3a39;letter-spacing:-0.351px;">Modify the message properties</span>
<span class="t" style="left:888.25px;top:474.00px;font-size:11.2px;line-height:16px;color:#3b3a39;letter-spacing:-0.535px;">set the spam confidence level (SCL)</span>
<span class="t" style="left:660.50px;top:501.20px;font-size:11.2px;line-height:16px;color:#3b3a39;letter-spacing:-0.546px;">Set the spam confidence level (SCL) to</span>
<span class="t" style="left:837.50px;top:501.20px;font-size:10.6px;line-height:16px;color:#2f86d6;letter-spacing:0.083px;">'-1'</span>
<span class="t" style="left:660.50px;top:550.00px;font-size:11.2px;line-height:16px;color:#3b3a39;-webkit-text-stroke:.45px #3b3a39;letter-spacing:-0.535px;">And</span>
<span class="t" style="left:666.75px;top:572.00px;font-size:11.2px;line-height:16px;color:#3b3a39;letter-spacing:-0.351px;">Modify the message properties</span>
<span class="t" style="left:888.25px;top:572.00px;font-size:11.2px;line-height:16px;color:#3b3a39;letter-spacing:-0.595px;">set a message header</span>
<span class="t" style="left:660.50px;top:599.20px;font-size:11.2px;line-height:16px;color:#3b3a39;letter-spacing:-0.596px;">Set the message header</span>
<span class="t" style="left:775.75px;top:599.20px;font-size:10.6px;line-height:16px;color:#2f86d6;letter-spacing:-0.208px;">'X-MS-Exchange-Organization-BypassClutter'</span>
<span class="t" style="left:987.50px;top:599.20px;font-size:11.2px;line-height:16px;color:#3b3a39;letter-spacing:-0.380px;">to the value</span>
<span class="t" style="left:1047.00px;top:599.20px;font-size:10.6px;line-height:16px;color:#2f86d6;letter-spacing:-0.184px;">Enter text</span>
<span class="t" style="left:660.50px;top:647.80px;font-size:11.2px;line-height:16px;color:#3b3a39;-webkit-text-stroke:.45px #3b3a39;letter-spacing:-0.378px;">Except if</span>
<span class="t" style="left:666.75px;top:670.00px;font-size:11.2px;line-height:16px;color:#3b3a39;letter-spacing:-0.588px;">Select one</span>
<span class="t" style="left:888.00px;top:669.30px;font-size:11.2px;line-height:16px;color:#b3b0ad;letter-spacing:-0.637px;">Select one</span>
</div>

<!-- ================= overlays ================= -->
<div class="abs" style="left:483.8px;top:788px;width:313px;height:32px;background:#202228;box-shadow:0 0 3px rgba(0,0,0,.35)"></div>
<div class="abs" style="left:681.5px;top:793px;width:79px;height:22.5px;border-radius:3px;background:#c6c6c6"></div>
<div class="abs" style="left:492.4px;top:800px;width:1.3px;height:8.5px;background:#e8e8e8"></div>
<div class="abs" style="left:495.4px;top:800px;width:1.3px;height:8.5px;background:#e8e8e8"></div>
<span class="t" style="left:504.40px;top:796.20px;font-size:10.4px;line-height:16px;color:#ffffff;letter-spacing:-0.497px;">Clueso Extension is sharing your screen.</span>
<span class="t" style="left:768.40px;top:796.20px;font-size:10.4px;line-height:16px;color:#8ab4f8;letter-spacing:-0.694px;text-decoration:underline;">Hide</span>
<svg class="i" style="left:888.30px;top:729.30px" width="9" height="14" viewBox="0 0 9 14" ><path d="M.7 .800V11.300L3.200 9 4.900 13 6.600 12.300 4.900 8.400H8.300z" fill="#111" stroke="#fff" stroke-width=".8" stroke-linejoin="round"/></svg>
</div>
</body>
</html>
